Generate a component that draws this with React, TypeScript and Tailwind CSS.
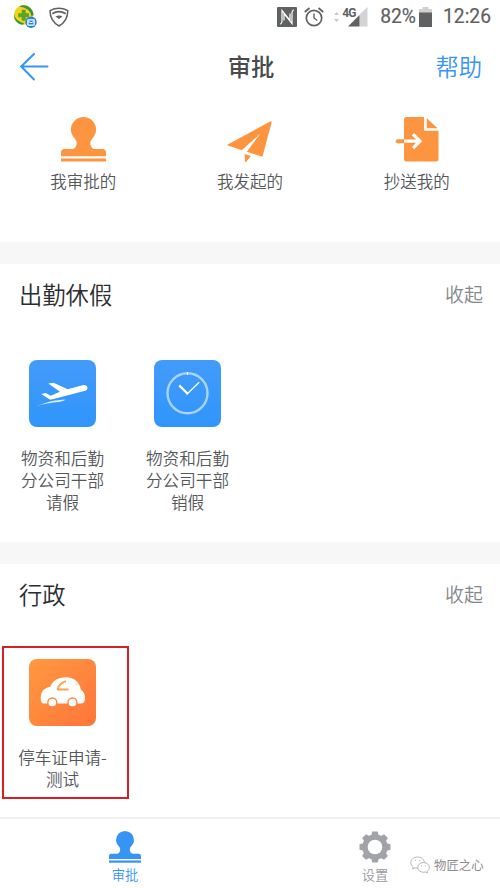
import type { ReactNode } from 'react'

function StampIcon({ className }: { className: string }) {
  return (
    <svg className={className} viewBox="0 0 45 45" fill="currentColor">
      <path d="M22.500 0a12.600 12.600 0 0 1 12.600 12.600c0 4.200-2 7-4.200 9.300-2 2.200-2 5-.9 7.300.9 2 2.400 2.800 4.800 2.800h6.700a3.500 3.500 0 0 1 3.500 3.500v3.700H0v-3.700A3.500 3.500 0 0 1 3.500 32h6.700c2.400 0 3.900-.8 4.800-2.800 1.100-2.300 1.100-5.100-.9-7.300-2.200-2.300-4.200-5.100-4.200-9.300A12.600 12.600 0 0 1 22.500 0z" />
      <path d="M0 41.400h45v3.200H0z" />
    </svg>
  )
}

function PaperPlaneIcon() {
  return (
    <svg className="w-[45px] h-[45px]" viewBox="0 0 45 45" fill="currentColor">
      <path d="M43.200 4.500.8 27.400c-.6.4-.5 1 .1 1.200l13.800 4.600L33 17 19.800 34.800l14.700 4.600c.7.200 1.200-.1 1.300-.8L44.600 5.400c.2-.9-.5-1.400-1.400-.9z" />
      <path d="m17.800 37 6.200 1.900-5.100 6.300c-.4.500-1 .4-1-.3z" />
    </svg>
  )
}

function SendFileIcon() {
  return (
    <svg className="w-[45px] h-[45px]" viewBox="-1.500 0 45 45" fill="currentColor">
      <path d="M11 0h17.600v13.800H43V42a2.500 2.500 0 0 1-2.500 2.500H11A2.500 2.500 0 0 1 8.500 42V2.500A2.500 2.500 0 0 1 11 0z" />
      <path d="M31.300 1.200 42 11.300H31.300z" />
      <path d="M2.200 22.200h6.300v4H2.200a2 2 0 0 1 0-4z" />
      <path d="M8.500 24.200h15M17.500 17.200l7 7-7 7" fill="none" stroke="#fff" strokeWidth="3.200" />
    </svg>
  )
}

function FlightIcon() {
  return (
    <svg className="w-full h-full" viewBox="0 0 67 67" fill="#fff">
      <path d="m19.300 23.600 5.200-.8 14.300 6.400 14.700-4c2.700-.7 4.600.3 4.900 2.200.3 1.800-1 3.200-3.200 3.700l-32.700 8.300c-1.300.3-2.300.1-3.200-.8L12.300 34l4.400-.9 5 2.600 9.300-4z" />
      <path d="M6.500 46.600 17 42.700c5-1.800 12-2.900 19-3.300l-.6 1-5 1.700c-8 .4-16 1.900-23.900 4.500z" opacity=".8" />
    </svg>
  )
}

function ClockIcon() {
  return (
    <svg className="w-full h-full" viewBox="0 0 67 67" fill="none" stroke="#fff">
      <circle cx="33.500" cy="33.300" r="20" stroke="#a9d3ff" strokeWidth="2.400" />
      <path d="M33.500 12v3" strokeWidth="1" />
      <path d="m25.200 25.400 8.500 8.300" strokeWidth="2.200" />
      <path d="m32.600 34.500 12.600-12.200" strokeWidth="1.300" />
    </svg>
  )
}

function CarIcon() {
  return (
    <svg className="w-full h-full" viewBox="0 0 67 67" fill="#fff">
      <path d="M11.700 39.500c0-6.500 3-10.500 9.500-11.700C23.500 22 28.800 18.300 37 18.300c8.500 0 13.500 5 15 12.700 2.800 1.500 4 4.300 4 8.500 0 3.200-1.200 5-4 5H15c-2.400 0-3.300-1.800-3.300-5z" />
      <path d="M37 22.200c-4.800 1.200-7 3.800-8.500 8.300H39.500" fill="none" stroke="#fca34d" strokeWidth="1.800" strokeLinejoin="round" />
      <circle cx="23.300" cy="43.500" r="4.500" stroke="#ff843d" strokeWidth="1.300" />
      <circle cx="43.500" cy="43.500" r="4.500" stroke="#ff843d" strokeWidth="1.300" />
    </svg>
  )
}

function GearIcon() {
  return (
    <svg className="w-8 h-8" viewBox="-16 -16 32 32" fill="#a1a3a8">
      {[0, 45, 90, 135].map((deg) => (
        <path key={deg} d="m-3.400-12.500.7-3h5.400l.7 3v25l-.7 3h-5.400l-.7-3z" transform={`rotate(${deg})`} />
      ))}
      <circle r="12.700" />
      <circle r="7.300" fill="#fff" />
    </svg>
  )
}

function StatusBar() {
  return (
    <div className="flex h-[34px] items-center justify-between pl-[13px] pr-[9px] text-[#5f6163]">
      <div className="flex items-center gap-3">
        <svg className="h-6 w-6" viewBox="0 0 24 24">
          <circle cx="10.700" cy="10" r="9.800" fill="#f4d51b" />
          <path d="M6 1.500A9.800 9.800 0 0 1 20.500 10l-2 1.500C17.500 5 13 2.500 6 1.500zM1 9c1 5 5 8 10 9l-1 1.800C4.500 19.500.5 15 1 9z" fill="#3d963e" />
          <path d="M8.700 4.800h4v3.500H16v4h-3.300v3.500h-4v-3.500H5.200v-4h3.500z" fill="#57a52b" />
          <circle cx="18" cy="17.300" r="5.700" fill="#2783dc" />
          <rect x="14.800" y="14.800" width="6.400" height="5.400" rx=".7" fill="none" stroke="#fff" strokeWidth="1.200" />
          <path d="m15 17 2 0 1 1 1-1h2" fill="none" stroke="#fff" />
        </svg>
        <svg className="h-5 w-5" viewBox="0 0 20 20" fill="none" stroke="currentColor">
          <path d="M1 3.700Q10-1 18.800 3.700C18.800 11 16 15.500 10 19 4 15.500 1 11 1 3.700z" strokeWidth="1.500" />
          <path d="M3.300 6.700q6.700-4 13.400 0" strokeWidth="1.700" />
          <path d="M6.500 9.500Q10 7.500 13.500 9.500L10 12z" fill="currentColor" stroke="none" />
        </svg>
      </div>
      <div className="flex items-center font-['Roboto',sans-serif]">
        <svg className="h-5 w-5" viewBox="0 0 20 20">
          <path d="M1 0h18a1 1 0 0 1 1 1v18a1 1 0 0 1-1 1H1a1 1 0 0 1-1-1V1a1 1 0 0 1 1-1z" fill="currentColor" />
          <path d="M3.300 17.300c1.200-.7 1.700-1.300 1.700-3V3.500l8 9.800V6.500M16.700 2.700c-1.200.7-1.700 1.300-1.700 3v10.800L7 6.700v6.800" fill="none" stroke="#fff" strokeWidth="1.200" />
        </svg>
        <svg className="ml-[7px] h-5 w-5" viewBox="0 0 20 20" fill="none" stroke="currentColor">
          <circle cx="10" cy="11" r="7.700" strokeWidth="1.700" />
          <path d="M10 6.500V11l3.200 2.500" strokeWidth="1.400" />
          <path d="M.8 5 5.500 1M19.200 5l-4.700-4" strokeWidth="1.800" />
        </svg>
        <svg className="ml-[10px] h-3 w-[5px]" viewBox="0 0 5 12" fill="#c9c9c9">
          <path d="M0 4 2.500 1 5 4zM0 8l2.500 3L5 8z" />
        </svg>
        <div className="relative ml-[3px] h-5 w-[26px]">
          <svg className="h-5 w-[26px]" viewBox="0 0 26 20">
            <path d="M17.500 7.500 25.500 0v19.500h-8z" fill="#d4d4d4" />
            <path d="M6 19.500 17.500 8v11.500z" fill="currentColor" />
          </svg>
          <span className="absolute left-0 top-0 text-[12px] leading-[12px] font-bold tracking-[-0.7px]">4G</span>
        </div>
        <span className="ml-3 text-[19.300px] leading-none font-normal [-webkit-text-stroke:0.2px_#5f6163]">82%</span>
        <svg className="ml-[3px] h-5 w-[13px]" viewBox="0 0 13 20">
          <path d="M0 2h3.500V0h6v2H13v4H0z" fill="#d0d0d0" />
          <path d="M0 5.500h13V20H0z" fill="currentColor" />
        </svg>
        <span className="ml-[11px] text-[19.300px] leading-none font-normal [-webkit-text-stroke:0.2px_#5f6163]">12:26</span>
      </div>
    </div>
  )
}

function Shortcut({ icon, label }: { icon: ReactNode; label: string }) {
  return (
    <div className="flex flex-col items-center text-[#fd9540]">
      {icon}
      <span className="mt-[7px] text-[16.500px] leading-6 text-[#55585b]">{label}</span>
    </div>
  )
}

function SectionHeader({ title }: { title: string }) {
  return (
    <div className="flex h-[61px] items-center justify-between pl-[19px] pr-[17px]">
      <h2 className="text-[23.300px] leading-[33px] text-[#2b2d2f]">{title}</h2>
      <button className="pb-px text-[19px] leading-7 text-[#85888b]">收起</button>
    </div>
  )
}

function AppTile({ icon, lines, tone }: { icon: ReactNode; lines: string[]; tone: 'blue' | 'orange' }) {
  const bg =
    tone === 'blue'
      ? 'bg-linear-to-b from-[#429bfa] to-[#3095fb]'
      : 'bg-linear-to-br from-[#ff9840] to-[#ff753a]'
  return (
    <div className="flex flex-col items-center">
      <div className={`h-[67px] w-[67px] overflow-hidden rounded-lg ${bg}`}>{icon}</div>
      <div className="mt-[19.500px] text-center text-[16.600px] leading-[22.200px] text-[#55585b]">
        {lines.map((line) => (
          <div key={line}>{line}</div>
        ))}
      </div>
    </div>
  )
}

export default function App() {
  return (
    <div className="relative flex h-[888px] w-[500px] flex-col overflow-hidden bg-white font-['Noto_Sans_CJK_SC',sans-serif] font-[350]">
      <StatusBar />

      <header className="grid h-[66px] grid-cols-3 items-center pl-5 pr-[18px]">
        <svg className="h-7 w-[29px]" viewBox="0 0 29 28" fill="none" stroke="#3794f5" strokeWidth="2" strokeLinecap="round">
          <path d="M14 1 1.200 13.500 14 26.500M1.500 13.500H27.500" />
        </svg>
        <h1 className="pb-0.5 text-center text-[23.300px] font-medium leading-8 text-[#484b4e]">审批</h1>
        <button className="justify-self-end pb-0.5 text-[23.300px] leading-8 text-[#3794f5]">帮助</button>
      </header>

      <div className="grid h-[142px] grid-cols-3 pt-[17px]">
        <Shortcut icon={<StampIcon className="w-[45px] h-[45px]" />} label="我审批的" />
        <Shortcut icon={<PaperPlaneIcon />} label="我发起的" />
        <Shortcut icon={<SendFileIcon />} label="抄送我的" />
      </div>

      <section className="h-[300px] border-t-[22px] border-[#f7f7f7]">
        <SectionHeader title="出勤休假" />
        <div className="grid grid-cols-4 pt-[35px]">
          <AppTile tone="blue" icon={<FlightIcon />} lines={['物资和后勤', '分公司干部', '请假']} />
          <AppTile tone="blue" icon={<ClockIcon />} lines={['物资和后勤', '分公司干部', '销假']} />
        </div>
      </section>

      <section className="flex-1 border-t-[22px] border-[#f7f7f7]">
        <SectionHeader title="行政" />
        <div className="grid grid-cols-4 pt-[34px]">
          <AppTile tone="orange" icon={<CarIcon />} lines={['停车证申请-', '测试']} />
        </div>
      </section>

      {/* Highlight around the parking permit entry */}
      <div className="absolute left-[2px] top-[646px] h-[153px] w-[127px] border-2 border-[#d91f26]" />

      <nav className="grid h-[71px] grid-cols-2 border-t-2 border-[#f0f0f0] pt-3">
        <div className="flex flex-col items-center text-[#3794f5]">
          <StampIcon className="w-8 h-8" />
          <span className="mt-0.5 text-[13.300px] leading-5">审批</span>
        </div>
        <div className="flex flex-col items-center text-[#999b9f]">
          <GearIcon />
          <span className="mt-0.5 text-[13.300px] leading-5">设置</span>
        </div>
      </nav>

      {/* Account watermark */}
      <div className="absolute left-[410px] top-[855px] flex items-center gap-1">
        <svg className="h-[18px] w-5" viewBox="0 0 20 18" fill="#fff" stroke="#a5a5a5" strokeWidth=".8">
          <path d="M7.500 1C3.500 1 .8 3.500.8 6.600c0 1.800.9 3.300 2.400 4.400l-.6 2 2.400-1.200c.8.200 1.600.4 2.500.4 4 0 6.800-2.600 6.800-5.600S11.500 1 7.500 1z" />
          <path d="M13.500 6.500c-3.300 0-5.800 2.200-5.800 4.900s2.500 4.900 5.800 4.900c.7 0 1.400-.1 2-.3l2 1-.5-1.700c1.400-.9 2.300-2.300 2.300-3.900 0-2.700-2.500-4.900-5.800-4.900z" />
          <path d="M5 4.500h.6M9.500 4.500h.6M11 10h.6M15.300 10h.6" stroke="#888" strokeWidth="1.200" />
        </svg>
        <span className="text-[12.400px] leading-5 font-normal text-[#8d8d8d]">物匠之心</span>
      </div>
    </div>
  )
}
